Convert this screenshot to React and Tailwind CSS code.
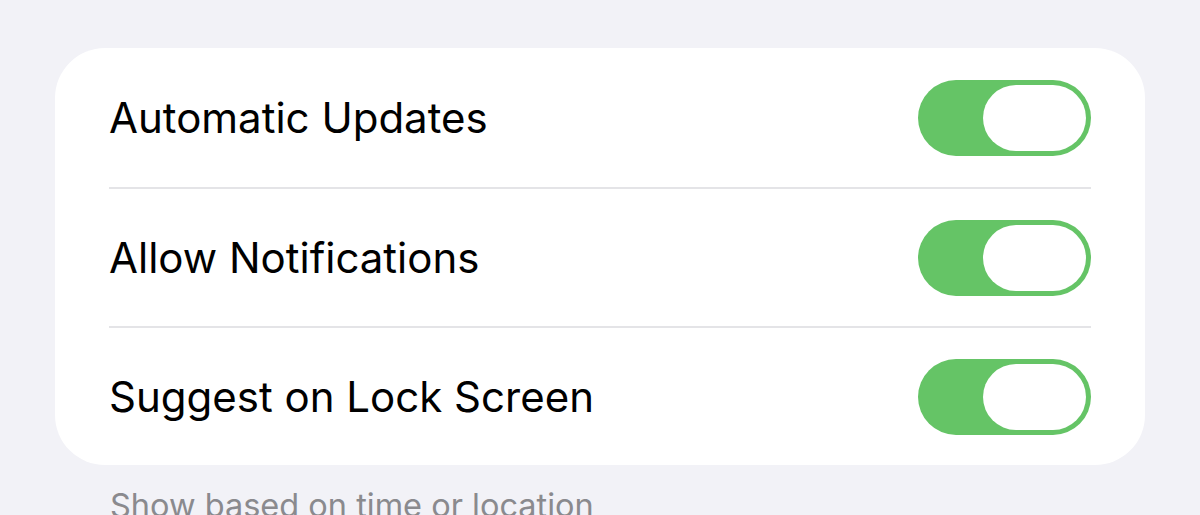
import React from "react";

function Toggle() {
  return (
    <div className="w-[173px] h-[76px] rounded-full bg-[#65c466] p-[5px] flex justify-end items-center shrink-0">
      <div className="w-[103px] h-[66px] rounded-full bg-white" />
    </div>
  );
}

const rows = ["Automatic Updates", "Allow Notifications", "Suggest on Lock Screen"];

export default function App() {
  return (
    <div className="w-[1200px] h-[515px] overflow-hidden bg-[#f2f2f7] pt-[48px] px-[55px]" style={{ fontFamily: "Inter, 'Liberation Sans', sans-serif" }}>
      <div className="bg-white rounded-[50px]">
        {rows.map((r, i) => (
          <div key={r} className="mx-[54px] flex flex-col">
            {i > 0 && <div className="h-[2px] bg-[#e4e4e7]" />}
            <div className={`flex items-center justify-between ${i === 0 ? "h-[139px]" : "h-[137px]"}`}>
              <span className="text-[42px] text-black leading-[50px]">{r}</span>
              <Toggle />
            </div>
          </div>
        ))}
      </div>
      <div className="pl-[55px] pt-[20px] text-[32.5px] text-[#8a8a8e] leading-[42px]">Show based on time or location</div>
    </div>
  );
}
